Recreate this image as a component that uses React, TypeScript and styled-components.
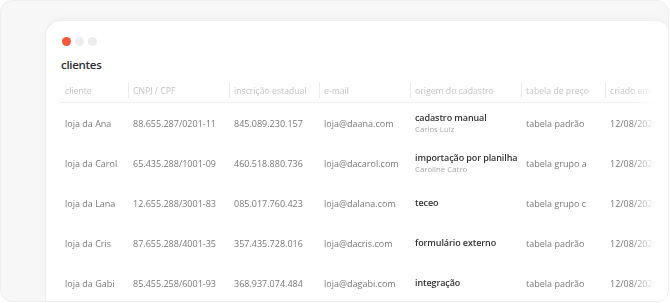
import React from "react";
import styled, { createGlobalStyle } from "styled-components";

const Global = createGlobalStyle`
  html, body { margin: 0; padding: 0; background: #ffffff; }
  body { font-family: "Open Sans", "Noto Sans", sans-serif; }
  * { box-sizing: border-box; }
`;

const Stage = styled.div`
  width: 669px;
  height: 302px;
  background: #f7f7f7;
  border: 1px solid #efefef;
  border-radius: 12px;
  overflow: hidden;
  padding: 19px 0 0 44px;
  display: flex;
`;

const Window = styled.div`
  flex: 1;
  background: #ffffff;
  border: 1px solid #eeeeee;
  border-right: none;
  border-bottom: none;
  border-radius: 16px 12px 0 0;
  box-shadow: 0 -3px 6px rgba(0, 0, 0, 0.025);
  padding: 16px 0 0 14px;
  display: flex;
  flex-direction: column;
`;

const Dots = styled.div`
  display: flex;
  gap: 4px;
  margin-left: 2px;
`;

const Dot = styled.span<{ $c: string }>`
  width: 9px;
  height: 9px;
  border-radius: 50%;
  background: ${(p) => p.$c};
`;

const Title = styled.h1`
  margin: 11px 0 0 1px;
  font-size: 11.5px;
  font-weight: 600;
  letter-spacing: -0.3px;
  color: #2e2e2e;
  line-height: 16px;
`;

const Table = styled.div`
  margin-top: 6px;
  display: grid;
  grid-template-columns: 68px 101px 90px 91px 111px 84px 1fr;
  -webkit-mask-image: linear-gradient(to right, #000 calc(100% - 38px), transparent calc(100% - 12px));
  mask-image: linear-gradient(to right, #000 calc(100% - 38px), transparent calc(100% - 12px));
`;

const Head = styled.div<{ $first?: boolean }>`
  height: 24px;
  display: flex;
  align-items: center;
  padding-left: 5px;
  border-bottom: 1px solid #f0f0f0;
  font-size: 8.7px;
  color: #c4c4c4;
  white-space: nowrap;
  position: relative;
  ${(p) =>
    p.$first
      ? ""
      : `&::before {
    content: "";
    position: absolute;
    left: 0;
    top: 3px;
    bottom: 4px;
    width: 1px;
    background: #ececec;
  }`}
`;

const Cell = styled.div`
  height: 40px;
  display: flex;
  flex-direction: column;
  justify-content: center;
  padding-left: 5px;
  font-size: 9px;
  color: #7a7a7a;
  white-space: nowrap;
  overflow: hidden;
`;

const Origin = styled.span`
  font-size: 9px;
  font-weight: 600;
  letter-spacing: -0.1px;
  color: #333333;
  line-height: 12px;
`;

const Author = styled.span`
  font-size: 7.8px;
  color: #a8a8a8;
  line-height: 11px;
`;

type Row = {
  cliente: string;
  doc: string;
  ie: string;
  email: string;
  origem: string;
  autor?: string;
  tabela: string;
};

const rows: Row[] = [
  { cliente: "loja da Ana", doc: "88.655.287/0201-11", ie: "845.089.230.157", email: "loja@daana.com", origem: "cadastro manual", autor: "Carlos Luiz", tabela: "tabela padrão" },
  { cliente: "loja da Carol", doc: "65.435.288/1001-09", ie: "460.518.880.736", email: "loja@dacarol.com", origem: "importação por planilha", autor: "Caroline Catro", tabela: "tabela grupo a" },
  { cliente: "loja da Lana", doc: "12.655.288/3001-83", ie: "085.017.760.423", email: "loja@dalana.com", origem: "teceo", tabela: "tabela grupo c" },
  { cliente: "loja da Cris", doc: "87.655.288/4001-35", ie: "357.435.728.016", email: "loja@dacris.com", origem: "formulário externo", tabela: "tabela padrão" },
  { cliente: "loja da Gabi", doc: "85.455.258/6001-93", ie: "368.937.074.484", email: "loja@dagabi.com", origem: "integração", tabela: "tabela padrão" },
];

const headers = ["cliente", "CNPJ / CPF", "inscrição estadual", "e-mail", "origem do cadastro", "tabela de preço", "criado em"];

export default function App() {
  return (
    <>
      <Global />
      <Stage>
        <Window>
          <Dots>
            <Dot $c="#f5573b" />
            <Dot $c="#ededed" />
            <Dot $c="#ededed" />
          </Dots>
          <Title>clientes</Title>
          <Table>
            {headers.map((h, i) => (
              <Head key={h} $first={i === 0}>{h}</Head>
            ))}
            {rows.map((r) => (
              <React.Fragment key={r.cliente}>
                <Cell>{r.cliente}</Cell>
                <Cell>{r.doc}</Cell>
                <Cell>{r.ie}</Cell>
                <Cell>{r.email}</Cell>
                <Cell>
                  <Origin>{r.origem}</Origin>
                  {r.autor && <Author>{r.autor}</Author>}
                </Cell>
                <Cell>{r.tabela}</Cell>
                <Cell>12/08/2024</Cell>
              </React.Fragment>
            ))}
          </Table>
        </Window>
      </Stage>
    </>
  );
}
